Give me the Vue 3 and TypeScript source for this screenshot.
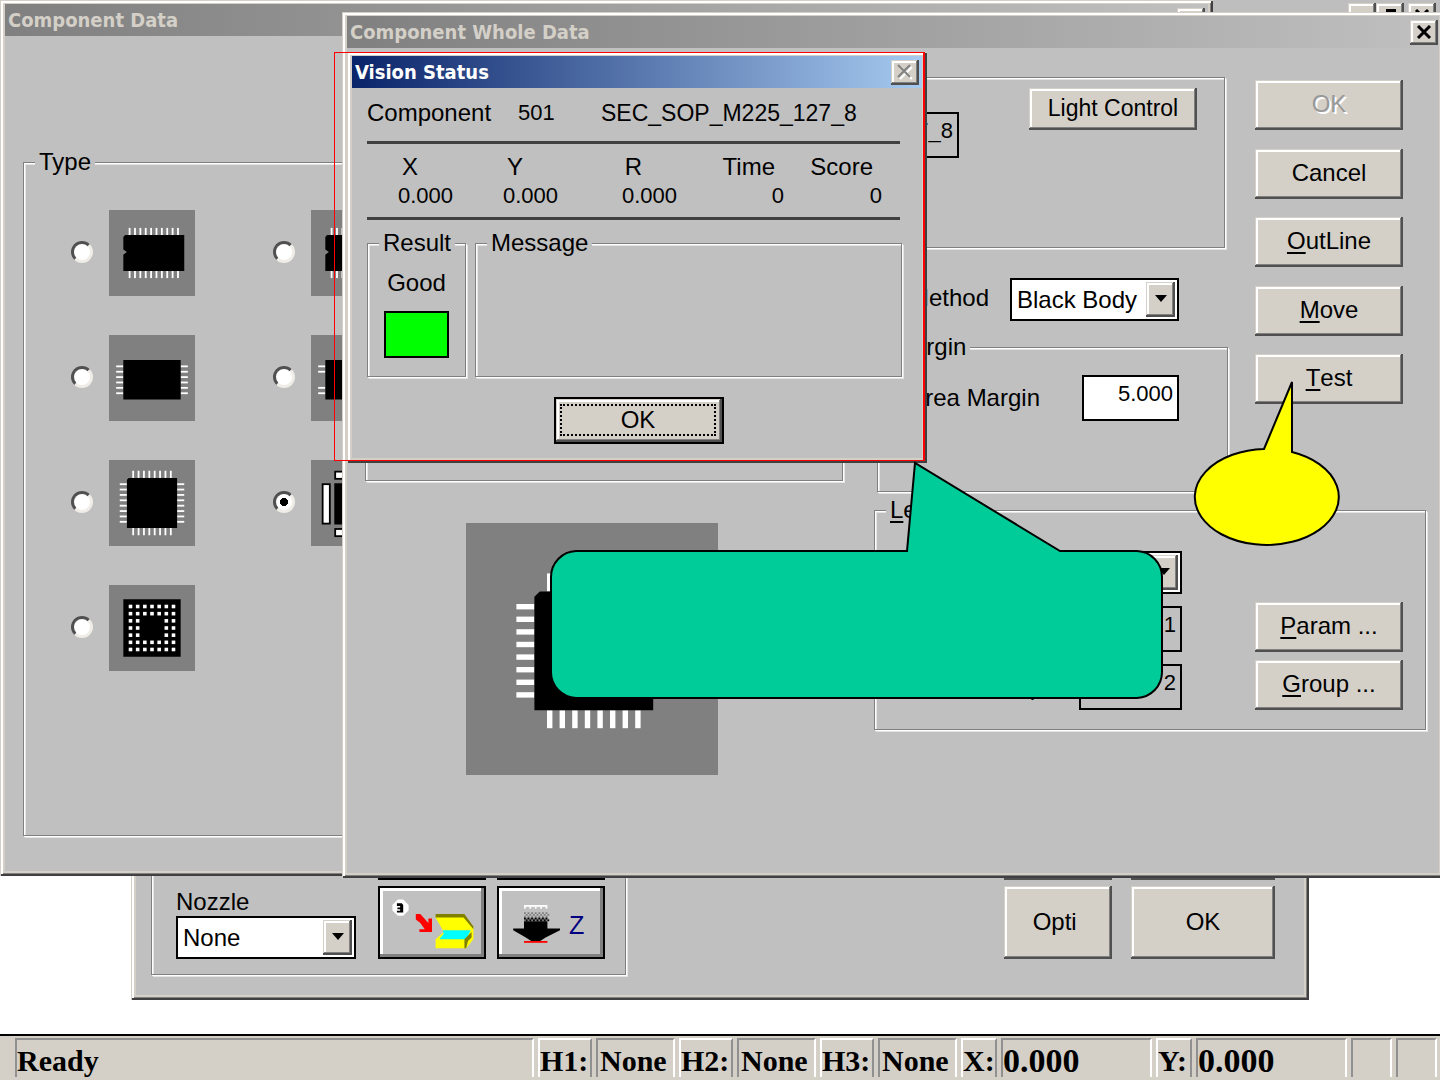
<script setup lang="ts">
import { ref } from 'vue'

type Rect = [number, number, number, number]

interface PartType {
  id: string
  label: string
  body: string
  pins: Rect[]
  pads: Rect[]
}

const run = (count: number, make: (i: number) => Rect): Rect[] =>
  Array.from({ length: count }, (_, i) => make(i))

const ballGrid: Rect[] = []
for (let r = 0; r < 7; r++) {
  for (let c = 0; c < 7; c++) {
    if (r < 2 || r > 4 || c < 2 || c > 4) ballGrid.push([11 + c * 4, 11 + r * 4, 2, 2])
  }
}

const sopPins: Rect[] = [
  ...run(10, (i) => [11 + i * 3, 10, 1, 4]),
  ...run(10, (i) => [11 + i * 3, 34, 1, 4]),
]
const sopBody = 'M9 14H42V34H8V25L10 23.5L8 22V15Z'

const partTypes: PartType[] = [
  { id: 'sop', label: 'SOP', body: sopBody, pins: sopPins, pads: [] },
  { id: 'ssop', label: 'SSOP', body: sopBody, pins: sopPins, pads: [] },
  {
    id: 'tsop', label: 'TSOP', body: 'M8 14H40V36H8Z', pads: [],
    pins: [...run(6, (i) => [4, 17 + i * 3, 4, 1]), ...run(6, (i) => [40, 17 + i * 3, 4, 1])],
  },
  {
    id: 'soj', label: 'SOJ', body: 'M8 14H40V36H8Z', pads: [],
    pins: [[4, 17, 4, 1], [4, 20, 4, 1], [4, 29, 4, 1], [4, 32, 4, 1]],
  },
  {
    id: 'qfp', label: 'QFP', body: 'M11 10H38V38H10V11Z', pads: [],
    pins: [
      ...run(8, (i) => [13 + i * 3, 6, 1, 4]),
      ...run(8, (i) => [13 + i * 3, 38, 1, 4]),
      ...run(8, (i) => [6, 13 + i * 3, 4, 1]),
      ...run(8, (i) => [38, 13 + i * 3, 4, 1]),
    ],
  },
  {
    id: 'user', label: 'User defined', body: 'M13 13H35V36H13Z', pins: [],
    pads: [[6, 13, 5, 23], [13, 6, 22, 5], [13, 38, 22, 5], [37, 13, 5, 23]],
  },
  { id: 'bga', label: 'BGA', body: 'M8 8H40V40H8Z', pins: ballGrid, pads: [] },
]

const previewPins: Rect[] = [
  ...run(8, (i) => [28, 45 + i * 7, 10, 3]),
  ...run(8, (i) => [104, 45 + i * 7, 10, 3]),
  ...run(8, (i) => [45 + i * 7, 28, 3, 10]),
  ...run(8, (i) => [45 + i * 7, 104, 3, 10]),
]

const teeth = run(5, (i) => [15 + i * 3, 11, 1, 1])
const dither = run(21, (i) => [15 + (i % 7) * 2 + (Math.floor(i / 7) % 2), 14 + Math.floor(i / 7), 1, 1])
const ditherDark = run(14, (i) => [15 + (i % 7) * 2 + (Math.floor(i / 7) % 2), 17 + Math.floor(i / 7), 1, 1])

const selectedType = ref('user')
const nozzle = ref('None')
const method = ref('Black Body')
const leadSide = ref('')
const areaMargin = ref('5.000')

const readings = [
  { name: 'X', value: '0.000', axis: true },
  { name: 'Y', value: '0.000', axis: true },
  { name: 'R', value: '0.000', axis: true },
  { name: 'Time', value: '0', axis: false },
  { name: 'Score', value: '0', axis: false },
]

const heads = ['H1:', 'H2:', 'H3:']
</script>

<template>
  <div class="screen">
    <main class="workspace">
      <div class="mdi-bar">
        <button class="btn caption-btn" aria-label="Minimize"></button>
        <button class="btn caption-btn" aria-label="Restore">
          <svg width="16" height="16" viewBox="0 0 16 16"><path d="M4 1H14V10H11V15H1V6H4ZM6 4V6H11V8H12V4Z" fill="#000" fill-rule="evenodd" /></svg>
        </button>
        <button class="btn caption-btn apart" aria-label="Close">
          <svg width="16" height="14" viewBox="0 0 16 14"><path d="M2 1L14 13M14 1L2 13" stroke="#000" stroke-width="3" /></svg>
        </button>
      </div>

      <section class="window feeder">
        <div class="feeder-body">
          <fieldset class="group nozzle-group">
            <div class="nozzle">
              <label for="nozzle">Nozzle</label>
              <span class="combo">
                <select id="nozzle" v-model="nozzle"><option>None</option></select>
                <span class="btn arrow" aria-hidden="true"><svg width="12" height="7" viewBox="0 0 12 7"><path d="M0 0H12L6 7Z" /></svg></span>
              </span>
            </div>
            <div class="tools">
              <button class="tool" aria-label="Previous"></button>
              <button class="tool" aria-label="Next"></button>
              <button class="tool" aria-label="Pick position">
                <svg viewBox="0 0 60 40" width="108" height="72">
                  <path d="M11 7H14L17 10V13L14 16H11L8 13V10Z" fill="#fff" />
                  <path d="M10.500 9H13.200L14 10V14.200H10.500V13.200H12.300V12.300H10.800V11.400H12.300V10.500H10.500Z" fill="#000" />
                  <path d="M21 15H23.500L28 20V17.500H30V25H23V23.500H26L23.500 20L21 18Z" fill="#f00" />
                  <path d="M32 16H48L53 22V29L49 34H32V29L36.500 25L32 17Z" fill="#ff0" />
                  <path d="M32 15H48L53 22V23.500L47.500 17H32Z" fill="#808000" />
                  <path d="M36 24H51.500L49 29H34L36.500 26Z" fill="#0ff" />
                  <path d="M48 29L52 25V28L50 30L49 34H48Z" fill="#808000" />
                </svg>
              </button>
              <button class="tool" aria-label="Move Z">
                <svg viewBox="0 0 60 40" width="108" height="72">
                  <rect x="15" y="10" width="13" height="1" fill="#fff" />
                  <rect v-for="(t, i) in teeth" :key="'t' + i" :x="t[0]" :y="t[1]" width="1" height="1" fill="#fff" />
                  <rect v-for="(t, i) in dither" :key="'d' + i" :x="t[0]" :y="t[1]" width="1" height="1" fill="#808080" />
                  <rect x="15" y="17" width="13" height="2" fill="#808080" />
                  <rect v-for="(t, i) in ditherDark" :key="'k' + i" :x="t[0]" :y="t[1]" width="1" height="1" fill="#000" />
                  <path d="M15 19H28V23H35V24L27 28L24 30H19L16 28L9 24V23H15Z" fill="#000" />
                  <rect x="15" y="30" width="13" height="1" fill="#f00" />
                  <text x="40" y="26" font-size="14" fill="#000080">Z</text>
                </svg>
              </button>
            </div>
          </fieldset>
          <div class="actions">
            <button class="btn" aria-label="Initialize"></button>
            <button class="btn" aria-label="Cancel"></button>
            <button class="btn">Opti&nbsp;</button>
            <button class="btn">OK</button>
          </div>
        </div>
      </section>

      <section class="window component-data">
        <header class="title">
          <h2>Component Data</h2>
          <button class="btn caption-btn" aria-label="Close Component Data"></button>
        </header>
        <fieldset class="group type-group">
          <legend>Type</legend>
          <div class="types">
            <label v-for="p in partTypes" :key="p.id" class="type">
              <input v-model="selectedType" type="radio" name="type" :value="p.id" :aria-label="p.label" />
              <svg class="tile" viewBox="0 0 48 48">
                <rect v-for="(r, i) in p.pins" v-show="p.id !== 'bga'" :key="'p' + i" :x="r[0]" :y="r[1]" :width="r[2]" :height="r[3]" fill="#fff" />
                <path :d="p.body" fill="#000" />
                <template v-if="p.id === 'bga'">
                  <rect v-for="(r, i) in p.pins" :key="'b' + i" :x="r[0]" :y="r[1]" :width="r[2]" :height="r[3]" fill="#fff" />
                </template>
                <template v-for="(r, i) in p.pads" :key="'q' + i">
                  <rect :x="r[0]" :y="r[1]" :width="r[2]" :height="r[3]" fill="#000" />
                  <rect :x="r[0] + 1" :y="r[1] + 1" :width="r[2] - 2" :height="r[3] - 2" fill="#fff" />
                </template>
              </svg>
            </label>
          </div>
        </fieldset>
      </section>

      <section class="window whole-data">
        <header class="title">
          <h2>Component Whole Data</h2>
          <button class="btn caption-btn" aria-label="Close Component Whole Data">
            <svg width="16" height="14" viewBox="0 0 16 14"><path d="M2 1L14 13M14 1L2 13" stroke="#000" stroke-width="3" /></svg>
          </button>
        </header>
        <div class="whole-body">
          <div class="left-col">
            <fieldset class="group size-group"></fieldset>
            <svg class="preview" viewBox="0 0 140 140">
              <rect v-for="(r, i) in previewPins" :key="i" :x="r[0]" :y="r[1]" :width="r[2]" :height="r[3]" fill="#fff" />
              <path d="M41 38H104V104H38V41Z" fill="#000" />
            </svg>
          </div>
          <div class="right-col">
            <div class="upper">
              <div class="settings">
                <fieldset class="group name-group">
                  <input class="box name-box" type="text" value="127_8" readonly aria-label="Component name" />
                  <button class="btn light">Light Control</button>
                </fieldset>
                <div class="method">
                  <label for="method">Method</label>
                  <span class="combo">
                    <select id="method" v-model="method"><option>Black Body</option></select>
                    <span class="btn arrow" aria-hidden="true"><svg width="12" height="7" viewBox="0 0 12 7"><path d="M0 0H12L6 7Z" /></svg></span>
                  </span>
                </div>
                <fieldset class="group margin-group">
                  <legend>Margin</legend>
                  <div class="margin-row">
                    <label for="area">Area Margin</label>
                    <input id="area" v-model="areaMargin" class="box white" type="text" />
                  </div>
                </fieldset>
              </div>
              <div class="commands">
                <button class="btn" disabled>OK</button>
                <button class="btn">Cancel</button>
                <button class="btn"><u>O</u>utLine</button>
                <button class="btn"><u>M</u>ove</button>
                <button class="btn"><u>T</u>est</button>
              </div>
            </div>
            <fieldset class="group lead-group">
              <legend><u>L</u>ead</legend>
              <div class="lead-row">
                <div class="lead-form">
                  <label for="side">Side</label>
                  <span class="combo">
                    <select id="side" v-model="leadSide"><option></option></select>
                    <span class="btn arrow" aria-hidden="true"><svg width="12" height="7" viewBox="0 0 12 7"><path d="M0 0H12L6 7Z" /></svg></span>
                  </span>
                  <label for="lead">Lead</label>
                  <input id="lead" class="box" type="text" value="1" readonly />
                  <label for="group">Group</label>
                  <input id="group" class="box" type="text" value="2" readonly />
                </div>
                <div class="lead-buttons">
                  <button class="btn"><u>P</u>aram ...</button>
                  <button class="btn"><u>G</u>roup ...</button>
                </div>
              </div>
            </fieldset>
          </div>
        </div>
      </section>

      <section class="window vision" role="dialog" aria-label="Vision Status">
        <header class="title active">
          <h2>Vision Status</h2>
          <button class="btn caption-btn" disabled aria-label="Close Vision Status">
            <svg width="18" height="16" viewBox="0 0 18 16">
              <path d="M4 3L16 15M16 3L4 15" stroke="#fff" stroke-width="2" />
              <path d="M2 1L14 13M14 1L2 13" stroke="#808080" stroke-width="2" />
            </svg>
          </button>
        </header>
        <div class="vision-body">
          <p class="part"><span class="k">Component</span><span class="n">501</span><span class="v">SEC_SOP_M225_127_8</span></p>
          <table class="readings">
            <thead>
              <tr><th v-for="r in readings" :key="r.name" scope="col" :class="{ axis: r.axis }">{{ r.name }}</th><td></td></tr>
            </thead>
            <tbody>
              <tr><td v-for="r in readings" :key="r.name">{{ r.value }}</td><td></td></tr>
            </tbody>
          </table>
          <div class="outcome">
            <fieldset class="group result">
              <legend>Result</legend>
              <span>Good</span>
              <div class="lamp"></div>
            </fieldset>
            <fieldset class="group message"><legend>Message</legend></fieldset>
          </div>
        </div>
        <button class="btn default"><span>OK</span></button>
      </section>

      <div class="highlight"></div>
      <svg class="callouts" width="1440" height="720" viewBox="0 0 1440 720" aria-hidden="true">
        <path d="M576 551H907L915 463L1060 551H1137A26 26 0 0 1 1162 577V672A26 26 0 0 1 1137 698H576A26 26 0 0 1 551 672V577A26 26 0 0 1 576 551Z" fill="#00cc99" stroke="#000" stroke-width="2" />
        <path d="M1264 449L1292 382V452A72 48 0 1 1 1264 449Z" fill="#ff0" stroke="#000" stroke-width="2" />
      </svg>
    </main>

    <footer class="status">
      <div class="cell ready">Ready</div>
      <template v-for="h in heads" :key="h">
        <div class="cell raised head">{{ h }}</div>
        <div class="cell tool-name">None</div>
      </template>
      <div class="cell raised axis-name">X:</div>
      <div class="cell position">0.000</div>
      <div class="cell raised axis-name">Y:</div>
      <div class="cell position">0.000</div>
      <div class="cell blank"></div>
      <div class="cell blank"></div>
    </footer>
  </div>
</template>

<style>
body {
  margin: 0;
}
</style>

<style scoped>
.screen {
  display: flex;
  flex-direction: column;
  min-height: 100vh;
  overflow: hidden;
  background: #fff;
  color: #000;
  font: 24px/28px "Liberation Sans", Arial, sans-serif;
}
.screen *,
.screen *::before {
  box-sizing: border-box;
}
.workspace {
  position: relative;
  flex: 1;
  min-height: 1034px;
}
button,
input,
select {
  margin: 0;
  color: inherit;
  font: inherit;
}
h2,
p {
  margin: 0;
}

/* Raised controls */
.btn {
  display: flex;
  align-items: center;
  justify-content: center;
  padding: 0 0 2px;
  border: 0;
  background: #d4d0c8;
  box-shadow: inset -2px -2px #505050, inset 1px 1px #d4d0c8, inset -3px -3px #808080, inset 3px 3px #fff;
  white-space: pre;
}
.btn:disabled {
  color: #999;
  text-shadow: 2px 2px #fff;
}
u {
  text-decoration-thickness: 2px;
  text-underline-offset: 3px;
}
.caption-btn {
  width: 28px;
  height: 25px;
  padding: 0;
}
.combo {
  display: flex;
  height: 43px;
  padding: 2px 2px 2px 5px;
  border: 2px solid #000;
  background: #fff;
}
.combo select {
  flex: 1;
  min-width: 0;
  padding: 0;
  border: 0;
  outline: 0;
  background: none;
  appearance: none;
}
.arrow {
  width: 29px;
}
.box {
  width: 103px;
  height: 46px;
  padding: 0 4px 8px;
  border: 2px solid #000;
  outline: 0;
  background: #c0c0c0;
  font-size: 22px;
  text-align: right;
}
.box.white {
  width: 97px;
  background: #fff;
}

/* Etched group frames */
.group {
  min-width: 0;
  margin: 0;
  padding: 0;
  border: 1px solid #808080;
  box-shadow: 1px 1px #fff, 2px 2px #e4e4e4, inset 1px 1px #fff, inset 2px 2px #e4e4e4;
}
.group legend {
  margin-left: 11px;
  padding: 0 4px;
  background: #c0c0c0;
}

/* Windows */
.window {
  position: absolute;
  display: flex;
  flex-direction: column;
  padding: 4px 5px 5px;
  background: #c0c0c0;
  box-shadow: inset 1px 1px #d4d0c8, inset -2px -2px #404040, inset 3px 3px #fff, inset -3px -3px #808080, inset 5px 5px #d4d0c8, inset -5px -5px #d4d0c8;
}
.title {
  display: flex;
  align-items: center;
  justify-content: space-between;
  height: 32px;
  margin-bottom: 1px;
  padding: 0 3px;
  background: linear-gradient(90deg, #808080, #c0c0c0);
  color: #d4d0c8;
}
.title h2 {
  font: bold 20px/28px "DejaVu Sans Condensed", "DejaVu Sans", sans-serif;
}
.title.active {
  background: linear-gradient(90deg, #0a246a, #a6caf0);
  color: #fff;
}
.mdi-bar {
  display: flex;
  justify-content: flex-end;
  height: 32px;
  padding: 3px 4px;
  background: #bebebe;
}
.apart {
  margin-left: 4px;
}

.feeder {
  top: 40px;
  left: 131px;
  width: 1178px;
  height: 960px;
}
.feeder-body {
  display: flex;
  flex: 1;
  align-items: flex-end;
  justify-content: space-between;
  padding: 0 29px 20px 15px;
}
.nozzle-group {
  display: flex;
  align-items: flex-end;
  gap: 22px;
  height: 300px;
  padding: 0 20px 15px 24px;
}
.nozzle {
  display: flex;
  flex-direction: column;
  width: 180px;
}
.tools {
  display: grid;
  grid-template-columns: 108px 108px;
  grid-auto-rows: 73px;
  gap: 6px 11px;
}
.tool {
  padding: 0;
  border: 0;
  background: #c0c0c0;
  box-shadow: inset 0 0 0 2px #000, inset -5px -5px #808080, inset 5px 5px #fff;
}
.tool svg {
  display: block;
}
.actions {
  display: grid;
  grid-template-columns: 108px 144px;
  grid-auto-rows: 73px;
  gap: 6px 19px;
  padding-bottom: 16px;
}

.component-data {
  top: 0;
  left: 0;
  width: 1213px;
  height: 876px;
}
.type-group {
  height: 688px;
  margin: 111px 18px 0;
}
.types {
  display: grid;
  grid-template-columns: 124px 124px;
  gap: 39px 78px;
  padding: 34px 0 0 47px;
}
.type {
  display: flex;
  align-items: center;
  gap: 16px;
}
.type input {
  width: 22px;
  height: 22px;
  margin-bottom: 3px;
  border: 3px solid;
  border-color: #505050 #f0ede8 #f0ede8 #505050;
  border-radius: 50%;
  background: #fff;
  appearance: none;
}
.type input:checked {
  background: radial-gradient(circle, #000 4px, #fff 4px);
}
.tile {
  width: 86px;
  height: 86px;
  background: #808080;
}

.whole-data {
  top: 12px;
  right: -4px;
  left: 342px;
  height: 866px;
}
.whole-data .title {
  padding-right: 1px;
}
.whole-body {
  display: grid;
  grid-template-columns: 478px 1fr;
  column-gap: 31px;
  padding: 28px 13px 0 18px;
}
.size-group {
  height: 404px;
}
.preview {
  display: block;
  width: 252px;
  height: 252px;
  margin: 42px 0 0 101px;
  background: #808080;
}
.upper {
  display: flex;
  align-items: flex-start;
  justify-content: space-between;
  padding-right: 23px;
}
.settings {
  width: 354px;
  padding-left: 3px;
}
.name-group {
  display: flex;
  align-items: flex-start;
  justify-content: space-between;
  height: 171px;
  margin-right: 3px;
  padding: 10px 27px 0 0;
}
.name-box {
  width: 81px;
  margin-top: 24px;
}
.light {
  width: 168px;
  height: 42px;
  font-size: 23px;
}
.method {
  display: flex;
  align-items: center;
  justify-content: flex-end;
  gap: 21px;
  padding: 30px 49px 12px 0;
}
.method label {
  padding-bottom: 4px;
}
.method .combo {
  width: 169px;
}
.margin-group {
  height: 159px;
}
.margin-row {
  display: flex;
  align-items: center;
  justify-content: flex-end;
  gap: 42px;
  padding: 14px 48px 0 0;
}
.commands {
  display: flex;
  flex-direction: column;
  justify-content: space-between;
  width: 148px;
  height: 327px;
  padding-top: 3px;
}
.commands .btn,
.lead-buttons .btn {
  height: 50px;
}
.lead-group {
  height: 234px;
  margin-top: 4px;
}
.lead-row {
  display: flex;
  align-items: flex-end;
  justify-content: flex-end;
  gap: 73px;
  padding: 27px 22px 0 0;
}
.lead-form {
  display: grid;
  grid-template-columns: auto 103px;
  align-items: center;
  gap: 12px 36px;
  text-align: right;
}
.lead-buttons {
  display: grid;
  gap: 8px;
  width: 148px;
}

.vision {
  top: 52px;
  left: 347px;
  width: 580px;
  height: 411px;
}
.vision-body {
  padding: 10px 20px 0 15px;
}
.part {
  display: flex;
  height: 42px;
}
.k {
  width: 151px;
}
.n {
  width: 83px;
  font-size: 22px;
}
.v {
  font-size: 23px;
}
.readings {
  width: 533px;
  border-top: 3px solid #404040;
  border-bottom: 3px solid #404040;
  border-spacing: 0;
  table-layout: fixed;
}
.readings th,
.readings td {
  padding: 0;
  font-weight: normal;
  text-align: right;
}
.readings th {
  height: 38px;
  padding: 8px 9px 0 0;
}
.readings th.axis {
  padding-right: 35px;
}
.readings th:nth-child(1) {
  width: 86px;
}
.readings th:nth-child(2) {
  width: 105px;
}
.readings th:nth-child(3) {
  width: 119px;
}
.readings th:nth-child(4) {
  width: 107px;
}
.readings th:nth-child(5) {
  width: 98px;
}
.readings tbody td {
  height: 35px;
  padding-bottom: 7px;
  font-size: 22px;
}
.outcome {
  display: flex;
  gap: 9px;
  padding-top: 9px;
}
.result {
  display: flex;
  flex-direction: column;
  align-items: center;
  width: 99px;
  height: 148px;
  padding-top: 12px;
}
.message {
  flex: 1;
}
.lamp {
  width: 65px;
  height: 47px;
  margin-top: 14px;
  border: 2px solid #000;
  background: #0f0;
}
.default {
  align-self: center;
  width: 170px;
  height: 47px;
  margin: 20px 0 0 4px;
  border: 2px solid #000;
  padding: 4px 6px 6px 4px;
}
.default span {
  flex: 1;
  border: 2px dotted #000;
}
.highlight {
  position: absolute;
  top: 52px;
  left: 334px;
  width: 591px;
  height: 409px;
  border: 1px solid #f00;
  border-right-width: 2px;
  pointer-events: none;
}
.callouts {
  position: absolute;
  top: 0;
  left: 0;
  pointer-events: none;
}

/* Status bar */
.status {
  display: flex;
  gap: 4px;
  height: 46px;
  padding: 2px 3px 3px 15px;
  border-top: 2px solid #000;
  background: #d4d0c8;
  font: bold 30px/42px "Liberation Serif", "Times New Roman", serif;
}
.cell {
  border: 2px solid;
  border-width: 2px 2px 0;
  border-color: #909090 #fff #fff #909090;
  white-space: nowrap;
}
.raised {
  border-color: #fff #909090 #909090 #fff;
}
.ready {
  flex: 1;
}
.head {
  width: 54px;
}
.tool-name {
  width: 79px;
  padding-left: 2px;
}
.axis-name {
  width: 36px;
}
.position {
  width: 151px;
  font-size: 34px;
}
.blank {
  width: 41px;
}
</style>
